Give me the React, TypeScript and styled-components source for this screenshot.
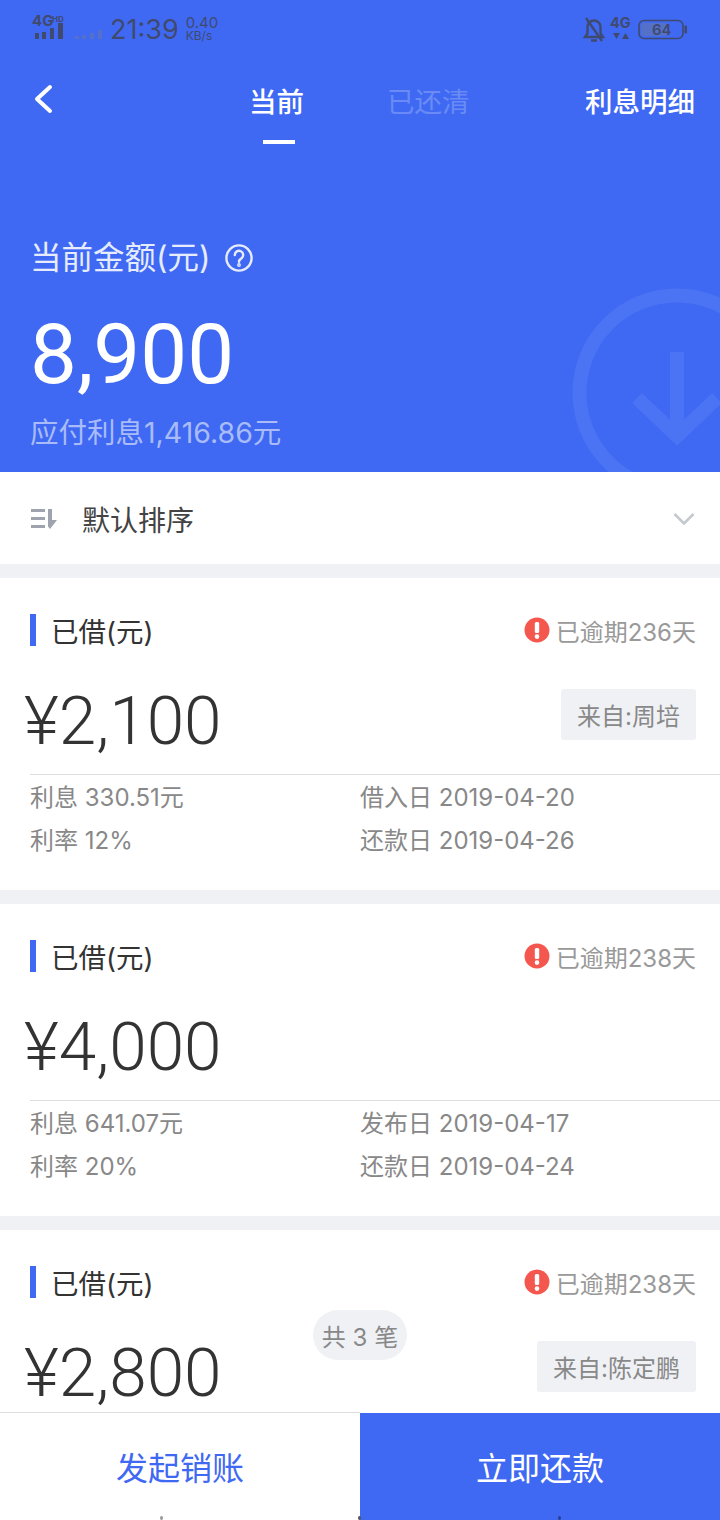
import React from "react";
import styled, { createGlobalStyle } from "styled-components";

const BLUE = "#3f69f3";

const GlobalStyle = createGlobalStyle`
  html, body {
    margin: 0;
    padding: 0;
    background: #fff;
  }
  body {
    font-family: "Inter", "Noto Sans CJK SC", sans-serif;
  }
  * {
    box-sizing: border-box;
  }
`;

const Page = styled.div`
  position: relative;
  width: 720px;
  height: 1520px;
  overflow: hidden;
  background: #eff1f5;
`;

const Hero = styled.header`
  position: relative;
  height: 472px;
  background: ${BLUE};
  overflow: hidden;
`;

const StatusBar = styled.div`
  height: 56px;
  padding: 11px 32px 0 32px;
  display: flex;
  align-items: flex-start;
  justify-content: space-between;
  color: #3f4a6e;
`;

const StatusGroup = styled.div<{ $gap: number }>`
  display: flex;
  align-items: center;
  height: 38px;
  gap: ${(p) => p.$gap}px;
`;

const Clock = styled.span`
  font-size: 27px;
  line-height: 34px;
  margin-left: 2px;
`;

const NetSpeed = styled.span`
  display: flex;
  flex-direction: column;
  font-size: 15px;
  line-height: 14px;
  margin: 0 0 3px 1px;
  & small {
    font-size: 12px;
    line-height: 12px;
  }
`;

const Nav = styled.nav`
  height: 96px;
  display: grid;
  grid-template-columns: 219px 60px 138px 1fr;
  padding: 0 25px 0 30px;
`;

const BackCell = styled.div`
  padding-top: 28px;
`;

const NavTab = styled.div<{ $dim?: boolean; $right?: boolean }>`
  position: relative;
  font-size: 27.5px;
  line-height: 40px;
  padding-top: 26px;
  height: 96px;
  white-space: nowrap;
  font-weight: ${(p) => (p.$dim ? 400 : 500)};
  color: ${(p) => (p.$dim ? "#6a8bf6" : "#fff")};
  text-align: ${(p) => (p.$right ? "right" : "left")};
  margin-left: ${(p) => (p.$dim ? "78px" : "0")};
`;

const TabMark = styled.span`
  position: absolute;
  left: 14px;
  top: 84px;
  width: 32px;
  height: 4px;
  background: #fff;
`;

const Summary = styled.section`
  padding: 84px 30px 0;
  color: #fff;
`;

const SummaryLabel = styled.div`
  display: flex;
  align-items: center;
  gap: 14px;
  font-size: 31.5px;
  line-height: 44px;
  color: #e6ecfe;
`;

const SummaryAmount = styled.div`
  font-family: "Roboto", sans-serif;
  font-size: 83.5px;
  line-height: 92px;
  margin-top: 29px;
`;

const SummaryNote = styled.div`
  font-size: 28.5px;
  line-height: 40px;
  margin-top: 12px;
  color: #a9bcf9;
`;

const Watermark = styled.svg`
  position: absolute;
  left: 570px;
  top: 286px;
`;

const SortRow = styled.div`
  height: 92px;
  background: #fff;
  display: flex;
  align-items: center;
  padding: 2px 25px 0 30px;
  font-size: 28px;
  color: #444;
  gap: 24px;
`;

const SortLabel = styled.span`
  flex: 1;
`;

const Card = styled.article`
  margin-top: 14px;
  height: 312px;
  background: #fff;
  padding-top: 36px;
`;

const CardHead = styled.div`
  display: flex;
  align-items: center;
  justify-content: space-between;
  height: 32px;
  padding: 0 24px 0 30px;
`;

const CardTitle = styled.div`
  display: flex;
  align-items: center;
  gap: 15px;
  font-size: 27.5px;
  color: #333;
`;

const TitleBar = styled.span`
  width: 6px;
  height: 32px;
  background: ${BLUE};
`;

const Overdue = styled.div`
  display: flex;
  align-items: center;
  gap: 6px;
  font-size: 24px;
  color: #999;
`;

const AmountRow = styled.div`
  height: 104px;
  margin-top: 24px;
  padding: 0 24px;
  display: flex;
  align-items: flex-start;
  justify-content: space-between;
`;

const Amount = styled.div`
  font-family: "Roboto", sans-serif;
  font-size: 67.5px;
  line-height: 78px;
  color: #333;
  font-weight: 300;
  margin-top: 12px;
`;

const Source = styled.div`
  height: 51px;
  margin-top: 19px;
  padding: 0 16px;
  display: flex;
  align-items: center;
  border-radius: 3px;
  background: #eff1f5;
  font-size: 24px;
  color: #888;
`;

const Details = styled.div`
  margin-left: 30px;
  border-top: 1px solid #dedede;
  display: grid;
  grid-template-columns: 330px 1fr;
  font-size: 24px;
  line-height: 43px;
  color: #888;
  padding-top: 1px;
`;

const CountPill = styled.div`
  position: absolute;
  left: 313px;
  top: 1310px;
  width: 94px;
  height: 50px;
  border-radius: 25px;
  background: #eff1f5;
  color: #888;
  font-size: 24px;
  display: flex;
  align-items: center;
  justify-content: center;
`;

const Footer = styled.footer`
  position: absolute;
  left: 0;
  top: 1412px;
  width: 720px;
  height: 108px;
  display: grid;
  grid-template-columns: 1fr 1fr;
  background: #fff;
`;

const FooterButton = styled.div<{ $primary?: boolean }>`
  display: flex;
  align-items: center;
  justify-content: center;
  height: 108px;
  padding-bottom: 2px;
  font-size: 32px;
  background: ${(p) => (p.$primary ? BLUE : "#fff")};
  color: ${(p) => (p.$primary ? "#fff" : BLUE)};
  border-top: 1px solid ${(p) => (p.$primary ? "#fff" : "#dedede")};
`;

const NavDot = styled.span<{ $left: number; $color: string }>`
  position: absolute;
  left: ${(p) => p.$left}px;
  top: 1516px;
  width: 3px;
  height: 4px;
  border-radius: 50%;
  background: ${(p) => p.$color};
`;

const SignalIcon = () => (
  <svg width="70" height="38" viewBox="0 0 70 38">
    <text x="0" y="15" fontSize="15" fontWeight="700" fill="#3f4a6e" fontFamily="Inter">4G</text>
    <text x="20" y="11" fontSize="8" fontWeight="700" fill="#3f4a6e" fontFamily="Inter">HD</text>
    <g fill="#3f4a6e">
      <rect x="3" y="22" width="4" height="6" />
      <rect x="10" y="21" width="4" height="7" />
      <rect x="18" y="17" width="4" height="11" />
      <rect x="26" y="12" width="5" height="16" />
    </g>
    <g fill="#5570c8">
      <rect x="43" y="25" width="4" height="3" />
      <rect x="50" y="24" width="4" height="4" />
      <rect x="58" y="22" width="4" height="6" />
      <rect x="66" y="19" width="4" height="9" />
    </g>
  </svg>
);

const MutedBell = () => (
  <svg width="24" height="26" viewBox="0 0 24 26" fill="none" stroke="#3f4a6e" strokeWidth="2.4">
    <path d="M3 20h18l-2.5-3.5V10a6.5 6.5 0 0 0-13 0v6.5z" />
    <path d="M9 23.5h6" />
    <path d="M4 1l16 23" />
  </svg>
);

const NetworkIcon = () => (
  <svg width="24" height="32" viewBox="0 0 24 32">
    <text x="0" y="14" fontSize="14.5" fontWeight="700" fill="#3f4a6e" fontFamily="Inter">4G</text>
    <path d="M3 19h7l-3.5 6zM12 25h7l-3.5-6z" fill="#3f4a6e" />
  </svg>
);

const Battery = () => (
  <svg width="50" height="22" viewBox="0 0 50 22">
    <rect x="1" y="1.5" width="44" height="18" rx="5" fill="none" stroke="#3f4a6e" strokeWidth="1.6" />
    <rect x="3" y="4" width="26" height="13" rx="2" fill="#5570c8" />
    <rect x="46.5" y="6.5" width="2.5" height="8" rx="1" fill="#3f4a6e" />
    <text x="14" y="16" fontSize="15" fontWeight="600" fill="#3f4a6e" fontFamily="Inter">64</text>
  </svg>
);

const BackIcon = () => (
  <svg width="28" height="32" viewBox="0 0 28 32" fill="none" stroke="#fff" strokeWidth="4" strokeLinecap="round" strokeLinejoin="round">
    <path d="M20 3L7 15l13 12" />
  </svg>
);

const HelpIcon = () => (
  <svg width="30" height="30" viewBox="0 0 30 30" fill="none" stroke="#e6ecfe" strokeWidth="2.4" strokeLinecap="round">
    <circle cx="15" cy="15" r="12.6" />
    <path d="M10.8 12a4.2 4.2 0 1 1 6.6 3.4c-1.4 1-2.4 1.6-2.4 3.4" />
    <circle cx="15" cy="22" r="0.7" />
  </svg>
);

const SortIcon = () => (
  <svg width="28" height="22" viewBox="0 0 28 22" fill="#9ea3ad">
    <rect x="1" y="1" width="14" height="3" />
    <rect x="1" y="9" width="14" height="3" />
    <rect x="1" y="17" width="14" height="3" />
    <path d="M18 1h4v11h5l-7 9-2-2.5z" />
  </svg>
);

const ChevronDown = () => (
  <svg width="22" height="14" viewBox="0 0 22 14" fill="none" stroke="#c4c8cf" strokeWidth="2.6">
    <path d="M1.5 2l9.5 9.5L20.5 2" />
  </svg>
);

const AlertIcon = () => (
  <svg width="26" height="26" viewBox="0 0 26 26">
    <circle cx="13" cy="13" r="12.5" fill="#f4574d" />
    <rect x="10.8" y="5" width="4.4" height="11" rx="1.6" fill="#fff" />
    <circle cx="13" cy="19.6" r="2.3" fill="#fff" />
  </svg>
);

const loans = [
  {
    amount: "¥2,100",
    overdue: "已逾期236天",
    source: "来自:周培",
    rows: ["利息 330.51元", "借入日 2019-04-20", "利率 12%", "还款日 2019-04-26"],
  },
  {
    amount: "¥4,000",
    overdue: "已逾期238天",
    rows: ["利息 641.07元", "发布日 2019-04-17", "利率 20%", "还款日 2019-04-24"],
  },
  {
    amount: "¥2,800",
    overdue: "已逾期238天",
    source: "来自:陈定鹏",
    rows: [],
  },
];

const App = () => {
  return (
    <Page>
      <GlobalStyle />
      <Hero>
        <StatusBar>
          <StatusGroup $gap={6}>
            <SignalIcon />
            <Clock>21:39</Clock>
            <NetSpeed>
              0.40
              <small>KB/s</small>
            </NetSpeed>
          </StatusGroup>
          <StatusGroup $gap={4}>
            <MutedBell />
            <NetworkIcon />
            <Battery />
          </StatusGroup>
        </StatusBar>
        <Nav>
          <BackCell>
            <BackIcon />
          </BackCell>
          <NavTab>
            当前
            <TabMark />
          </NavTab>
          <NavTab $dim>已还清</NavTab>
          <NavTab $right>利息明细</NavTab>
        </Nav>
        <Summary>
          <SummaryLabel>
            当前金额(元)
            <HelpIcon />
          </SummaryLabel>
          <SummaryAmount>8,900</SummaryAmount>
          <SummaryNote>应付利息1,416.86元</SummaryNote>
        </Summary>
        <Watermark width="150" height="186" viewBox="0 0 150 186" fill="none" stroke="#4b74f4" strokeWidth="14">
          <circle cx="107" cy="107" r="97.5" />
          <path d="M107 66v84M67 112l40 38 40-38" />
        </Watermark>
      </Hero>
      <SortRow>
        <SortIcon />
        <SortLabel>默认排序</SortLabel>
        <ChevronDown />
      </SortRow>
      {loans.map((loan) => (
        <Card key={loan.amount}>
          <CardHead>
            <CardTitle>
              <TitleBar />
              已借(元)
            </CardTitle>
            <Overdue>
              <AlertIcon />
              {loan.overdue}
            </Overdue>
          </CardHead>
          <AmountRow>
            <Amount>{loan.amount}</Amount>
            {loan.source && <Source>{loan.source}</Source>}
          </AmountRow>
          <Details>
            {loan.rows.map((row) => (
              <div key={row}>{row}</div>
            ))}
          </Details>
        </Card>
      ))}
      <CountPill>共 3 笔</CountPill>
      <Footer>
        <FooterButton>发起销账</FooterButton>
        <FooterButton $primary>立即还款</FooterButton>
      </Footer>
      <NavDot $left={160} $color="#999" />
      <NavDot $left={358} $color="#555" />
      <NavDot $left={558} $color="#2a3f8f" />
    </Page>
  );
};

export default App;
